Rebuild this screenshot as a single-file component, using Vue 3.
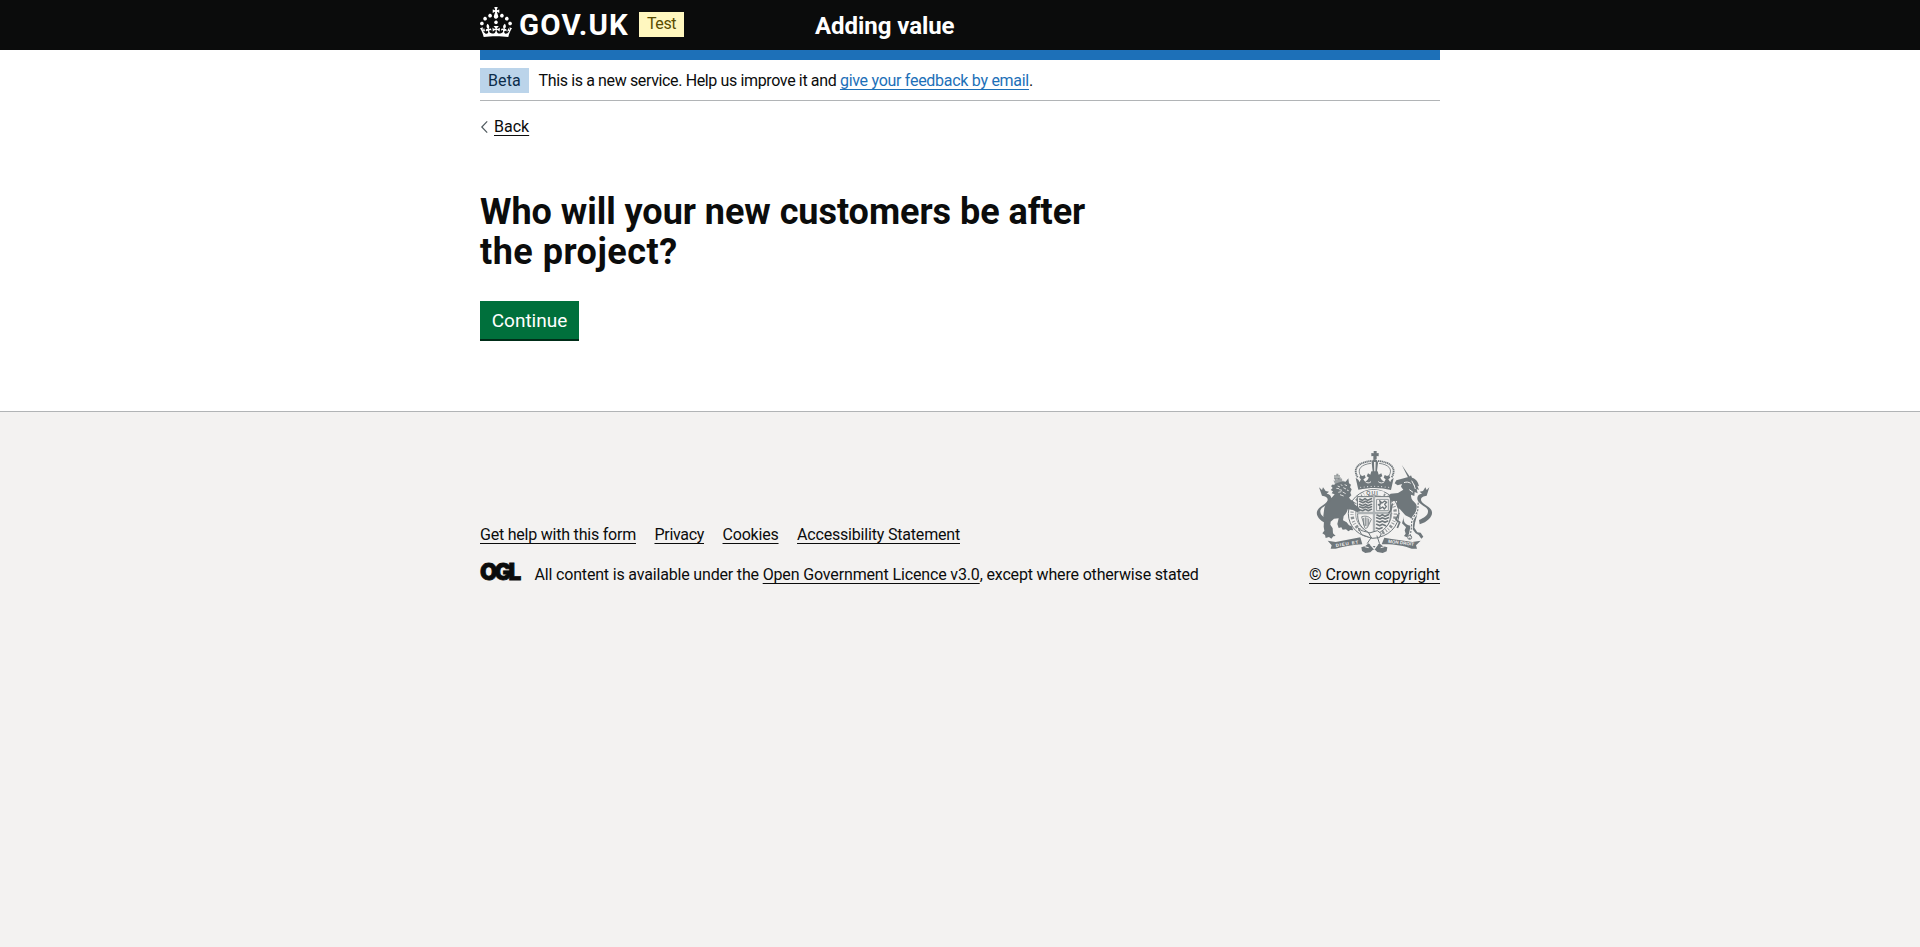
<script setup>
const footerLinks = [
  { label: 'Get help with this form', cls: 'help' },
  { label: 'Privacy', cls: 'privacy' },
  { label: 'Cookies', cls: 'cookies' },
  { label: 'Accessibility Statement', cls: 'access' },
]
const crownDots = Array.from({ length: 9 }, (_, i) => i)
</script>

<template>
  <div class="page">
    <header class="header">
      <div class="container header-row">
        <a class="brand" aria-label="GOV.UK">
          <svg class="crown" viewBox="0 0 32 30" width="32" height="30" fill="#fff" aria-hidden="true">
            <path d="M22.6 10.4c-1 .4-2-.1-2.4-1-.4-.9.1-2 1-2.4.9-.4 2 .1 2.4 1s-.1 2-1 2.4m-5.9 6.7c-.9.4-2-.1-2.4-1-.4-.9.1-2 1-2.4.9-.4 2 .1 2.4 1s-.1 2-1 2.4m10.8-3.7c-1 .4-2-.1-2.4-1-.4-.9.1-2 1-2.4.9-.4 2 .1 2.4 1s0 2-1 2.4m3.3 4.8c-1 .4-2-.1-2.4-1-.4-.9.1-2 1-2.4.9-.4 2 .1 2.4 1s-.1 2-1 2.4M17 4.7l2.3 1.2V2.5l-2.3.7-.2-.2.9-3h-3.4l.9 3-.2.2c-.1.1-2.3-.7-2.3-.7v3.4L15 4.7c.1.1.1.2.2.2l-1.3 4c-.1.2-.1.4-.1.6 0 1.1.8 2 1.9 2.2h.7c1-.2 1.9-1.1 1.9-2.1 0-.2 0-.4-.1-.6l-1.3-4c-.1-.2 0-.2.1-.3m-7.6 5.7c.9.4 2-.1 2.4-1 .4-.9-.1-2-1-2.4-.9-.4-2 .1-2.4 1s0 2 1 2.4m-5 3c.9.4 2-.1 2.4-1 .4-.9-.1-2-1-2.4-.9-.4-2 .1-2.4 1s.1 2 1 2.4m-3.2 4.8c.9.4 2-.1 2.4-1 .4-.9-.1-2-1-2.4-.9-.4-2 .1-2.4 1s0 2 1 2.4m14.8 11c4.4 0 8.6.3 12.3.8 1.1-4.5 2.4-7 3.7-8.8l-2.5-.9c.2 1.3.3 1.9 0 2.7-.4-.4-.8-1.1-1.1-2.3l-1.2 4c.7-.5 1.3-.8 2-.9-1.1 2.5-2.6 3.1-3.5 3-1.1-.2-1.7-1.2-1.5-2.1.3-1.2 1.5-1.5 2.1-.1 1.1-2.3-.8-3-2-2.3 1.9-1.9 2.1-3.5.6-5.6-2.1 1.6-2.1 3.2-1.2 5.5-1.2-1.4-3.2-.6-2.5 1.6.9-1.4 2.1-.5 1.9.8-.2 1.1-1.7 2.1-3.5 1.9-2.7-.2-2.9-2.1-2.9-3.6.7-.1 1.9.5 2.9 1.9l.4-4.3c-1.1 1.1-2.1 1.4-3.2 1.4.4-1.2 2.1-3 2.1-3h-5.4s1.7 1.9 2.1 3c-1.1 0-2.1-.2-3.2-1.4l.4 4.3c1-1.4 2.2-2 2.9-1.9-.1 1.5-.2 3.4-2.9 3.6-1.9.2-3.4-.8-3.5-1.9-.2-1.3 1-2.2 1.9-.8.7-2.3-1.2-3-2.5-1.6.9-2.2.9-3.9-1.2-5.5-1.5 2-1.3 3.7.6 5.6-1.2-.7-3.1 0-2 2.3.6-1.4 1.8-1.1 2.1.1.2.9-.3 1.9-1.5 2.1-.9.2-2.4-.5-3.5-3 .6 0 1.2.3 2 .9l-1.2-4c-.3 1.1-.7 1.9-1.1 2.3-.3-.8-.2-1.4 0-2.7l-2.9.9C1.3 23 2.6 25.5 3.7 30c3.7-.5 7.9-.8 12.3-.8" />
          </svg>
          <span class="wordmark">GOV.UK</span>
        </a>
        <strong class="tag tag-test">Test</strong>
        <span class="service">Adding value</span>
      </div>
    </header>

    <div class="container blue-bar"></div>

    <div class="container main-area">
      <div class="phase">
        <strong class="tag tag-beta">Beta</strong>
        <span class="phase-text"><span class="lead">This is a new service. Help us improve it and </span><a class="link blue">give your feedback by email</a>.</span>
      </div>

      <a class="back">
        <svg width="8" height="14" viewBox="0 0 8 14" fill="none" stroke="#505a5f" stroke-width="1.2" aria-hidden="true"><path d="M7.2 1.4 1.8 7l5.4 5.6" /></svg>
        <span class="link">Back</span>
      </a>

      <main class="main">
        <h1>Who will your new customers be after <span class="line-two">the project?</span></h1>
        <button class="continue" type="button">Continue</button>
      </main>
    </div>

    <footer class="footer">
      <div class="container footer-row">
        <div class="footer-main">
          <nav class="footer-links">
            <a v-for="l in footerLinks" :key="l.cls" class="link" :class="l.cls">{{ l.label }}</a>
          </nav>
          <div class="licence">
            <span class="ogl">OGL</span>
            <span><span class="lic-a">All content is available under the </span><a class="link lic-b">Open Government Licence v3.0</a><span class="lic-c">, except where otherwise stated</span></span>
          </div>
        </div>

        <div class="copyright">
          <svg class="crest" viewBox="80 155 351 306" width="117" height="102" aria-hidden="true">
            <g fill="none" stroke="#6f777b" stroke-linecap="round" stroke-linejoin="round">
              <!-- garter and shield -->
              <ellipse cx="253" cy="343" rx="76" ry="72" fill="#f3f2f1" stroke-width="3" />
              <ellipse cx="253" cy="343" rx="54" ry="55" stroke-width="2" />
              <ellipse cx="253" cy="343" rx="65" ry="63" stroke-width="10" stroke-dasharray="3 6 7 6 2 5" stroke-linecap="butt" opacity=".8" />
              <path d="M205 292h98v58c0 28-20 45-49 58-29-13-49-30-49-58z" fill="#f3f2f1" stroke-width="3" />
              <path d="M254 292v112M205 341h98" stroke-width="7" stroke="#aeb3b5" />
              <path d="M211 299l8 4 8-5 8 5 11-5M211 306l10 4 7-4 9 4 10-4M211 315l9 4 8-4 8 4 10-4M211 322l10 4 8-4 8 4 9-4M211 331l9 3 8-4 9 4 9-4" stroke-width="5" />
              <path d="M263 347l8 4 8-5 8 5 10-5M262 355l10 4 7-4 9 4 9-4M262 365l9 4 8-4 8 4 8-4M262 375l9 4 8-4 10 4M261 386l8 3 9-4" stroke-width="5" />
              <path d="M263 300h34v34h-34z" stroke-width="3" stroke="#90979a" />
              <path d="M271 304l7 7 8-6 6 4-6 6 5 7-6 7-5-6-9 6 1-9-5-4 7-2z" stroke-width="4" />
              <path d="M218 352c12-4 22 0 28 8l-12 25c-6 4-10 2-9-4zM223 357v20M228 355v24M233 356v24M238 359v16" stroke-width="2.5" />
              <path d="M207 386c10 12 22 9 33 15l24-7 12 9-6 12-22 2-30-11zM238 401l8 14M246 414l-12 18M263 410l7 21" stroke-width="3" fill="#f3f2f1" />
            </g>

            <g fill="#6f777b" font-family="Liberation Sans, sans-serif" font-weight="700">
              <path d="M226 291c14-8 38-9 56 0l3-14c-20-7-42-7-62 0z" fill="#f3f2f1" />
              <text x="231" y="288" font-size="16" letter-spacing="3">QUI</text>
            </g>

            <!-- crown -->
            <g fill="#6f777b">
              <path d="M253 155h9v7l6-1v10l-6-1v9h-10v-9l-6 1v-10l7 1z" />
              <path d="M247 190c1-8 5-11 9-11s8 3 10 11l-4 35h-11z" />
              <path d="M254 188h5l-1 34h-3z" fill="#f3f2f1" />
              <path d="M199 236c6 2 11 7 11 13l5-9-5-5 3-7 7 2 6-3 3 8-7 5 4 6c7 0 11-5 12-12l-6-3 4-9 7 4 3-10h19l3 10 8-4 3 9-6 3c2 7 6 12 13 12l3-6-6-5 3-8 7 3 6-2 4 7-6 5 6 9c0-6 5-11 10-13l-8 36c-31-8-62-8-98-1z" />
              <path d="M228 247c5 5 12 5 17 0M267 247c5 5 13 5 18 0" fill="none" stroke="#f3f2f1" stroke-width="3" />
              <circle v-for="i in crownDots" :key="i" :cx="214 + i * 10.5" :cy="264 - Math.sin(i / 8 * Math.PI) * 3" r="1.6" fill="#f3f2f1" />
            </g>
            <g fill="none" stroke="#6f777b" stroke-width="4">
              <path d="M205 234c-18-30 8-47 43-49M307 234c18-30-8-47-41-49" stroke-width="5.5" stroke-dasharray="4 1.5" />
              <path d="M214 230c-13-22 4-35 31-38M299 230c13-22-3-35-30-38" stroke-width="2.5" />
            </g>

            <!-- lion -->
            <g fill="#6f777b">
              <path d="M137 254l-5-11 4 2 2-8 5 4 4-5 5 4 6-3 1 8 5-1-4 10z" opacity=".65" />
              <path d="M141 223h6v5h5v4h-18v-4h7zM134 234h20v6h-20z" opacity=".7" />
              <path d="M133 257c10-7 25-12 36-10l8-10 2 15 6 4-3 8 5 6-4 10 3 8-7 7 6 7c7 1 10 6 11 13l13 10 4 11-10 2-14-7-14-1c-2 10-7 16-12 20l-2 13 11 6 7 9 8 3 5 12-9-1-6 4-7-6-10 1-4-7-8 2-4-12 4-17-14 1-10 9-1 9 7 11 1 15 8 8-7 1-6 7-7-5-10 3-2-9-8-5 6-8-2-12 1-17-2-16 3-23c3-14 12-24 24-33l7-8-9-3 4-6-7-4 6-6-5-6 6-5z" />
              <path d="M145 260l7 3M141 267l8 1M155 255l4 5M147 279l9-2M162 265l8 4M160 278l9 5M152 286l11 4M173 272l5 2M166 256l7 3M150 271l8 2" fill="none" stroke="#f3f2f1" stroke-width="2.5" />
              <path d="M119 375c-28-8-43-28-34-43 8-13 24-16 29-27 4-10-5-15-16-16l-9-25 9 8 3-8 8 11 10 2-7 6c16 2 17 17 7 27-10 11-27 14-26 27 1 12 12 18 28 25z" />
            </g>

            <!-- unicorn -->
            <g fill="#6f777b">
              <path d="M337 196l25 37-5 3z" />
              <path d="M360 232l5-4 3 7c13 3 19 14 21 26l-5-2 5 13-7-3 3 13-9-4-1 12-10-4c0 9 2 15 9 21 10 9 14 22 10 37l-7 27-2 14 9 14 10 1 8 12-6 6-8-11-9-5-10-13 3-20-9-14-15-7-16-18c-10-6-12-15-9-25-10 0-16 1-20-2l-2-8-5-5 8-7 22-2 16-10-7-9 3-8-13 4-9-6 5-9z" />
              <path d="M344 250c8-3 14-2 20 2M367 244l8 15M374 256l4 13M360 271l11 8" fill="none" stroke="#f3f2f1" stroke-width="3" />
              <path d="M309 312l-4 20-7 10M327 345l-7 16 11 8-7 17" fill="none" stroke="#6f777b" stroke-width="5" />
              <path d="M344 351c-5 20 8 28 26 29l-8 13-1 7-8 14-9-4 5-7-3-10 4-9-12-12z" />
              <path d="M391 375c28-8 43-28 35-43-8-13-25-16-30-27-4-10 5-15 16-16l8-25-8 8-4-8-7 11-10 2 7 6c-16 2-18 17-8 27 11 11 27 14 26 27-1 12-12 18-27 25z" />
              <path d="M387 310c-3 18 2 23-8 35-9 10-14 20-12 36l-6 38" fill="none" stroke="#f3f2f1" stroke-width="8" />
              <path d="M387 310c-3 18 2 23-8 35-9 10-14 20-12 36l-6 38" fill="none" stroke="#6f777b" stroke-width="3.5" stroke-dasharray="6 4" />
              <circle cx="361" cy="414" r="6" fill="none" stroke="#6f777b" stroke-width="3" />
            </g>

            <!-- motto ribbon -->
            <g fill="#6f777b">
              <path d="M115 424l24 4 74-14 6 21c-27 2-53 5-80 13h-15l3-10zM285 415c29 5 60 9 84 13l25-4-14 14 3 10h-16c-25-9-51-14-90-13z" />
              <path d="M216 444l12-4 10-8 8 8h16l8-8 10 8 14 4-2 12-12 5-16-3-7-7h-6l-8 8-15 2-10-6z" />
              <path d="M244 436l11 13 9-13" fill="none" stroke="#f3f2f1" stroke-width="4" />
              <path d="M226 442l12 3M274 445l11-3" fill="none" stroke="#f3f2f1" stroke-width="3" />
            </g>
            <g fill="#f3f2f1" font-family="Liberation Sans, sans-serif" font-weight="700" font-size="13.5">
              <text transform="translate(140 443) rotate(-9)" textLength="68">DIEU ET</text>
              <text transform="translate(296 430) rotate(7)" textLength="78">MON DROIT</text>
            </g>
          </svg>
          <a class="link copy">© Crown copyright</a>
        </div>
      </div>
    </footer>
  </div>
</template>

<style>
html, body { margin: 0; background: #f3f2f1; }
</style>

<style scoped>
.page {
  min-height: 947px;
  display: flex;
  flex-direction: column;
  background: #fff;
  color: #0b0c0c;
  font: 400 16px/20px Roboto, "Liberation Sans", sans-serif;
}
.container { width: 960px; margin: 0 auto; }

.header { height: 50px; background: #0b0c0c; color: #fff; }
.header-row { display: flex; align-items: flex-start; }
.brand { display: flex; width: 159px; }
.crown { margin-top: 7px; flex: none; }
.wordmark { margin: 10px 0 0 7px; font-size: 29.5px; line-height: 30px; font-weight: 700; letter-spacing: 1.15px; }
.tag {
  box-sizing: border-box;
  height: 25px;
  padding: 3px 0 2px 8px;
  font-weight: 400;
  flex: none;
}
.tag-test { width: 45px; margin-top: 12px; padding-top: 2px; background: #fff7bf; color: #594d00; letter-spacing: -.4px; }
.tag-beta { width: 49px; background: #bbd4ea; color: #0c2d4a; letter-spacing: .1px; }
.service { margin: 11px 0 0 131px; font-size: 24px; line-height: 30px; font-weight: 700; letter-spacing: -.06px; }

.blue-bar { height: 10px; background: #1d70b8; }

.phase {
  display: flex;
  height: 32px;
  padding-top: 8px;
  border-bottom: 1px solid #b1b4b6;
}
.phase-text { margin: 3px 0 0 9.5px; white-space: pre; }
.lead { letter-spacing: -.366px; }
.blue { color: #1d70b8; letter-spacing: -.285px; }
.link { text-decoration: underline; text-decoration-thickness: 1px; text-underline-offset: 3px; }

.back { display: flex; align-items: center; width: max-content; margin-top: 16px; }
.back svg { margin: -1px 6px 0 0; }

.main { padding-top: 55px; height: 219px; }
h1 { margin: 0; font-size: 36px; line-height: 40px; font-weight: 700; width: 640px; letter-spacing: -.04px; }
.line-two { letter-spacing: .5px; }
.continue {
  display: block;
  width: 99px;
  height: 38px;
  margin-top: 29px;
  padding: 1px 0 0;
  border: 0;
  background: #00703c;
  box-shadow: 0 2px 0 #002d18;
  color: #fff;
  font: 400 19px/37px Roboto, "Liberation Sans", sans-serif;
}

.footer { flex: 1; border-top: 1px solid #b1b4b6; background: #f3f2f1; }
.footer-row { display: flex; justify-content: space-between; align-items: flex-end; padding-top: 39px; }
.footer-links { display: flex; gap: 18.5px; margin-bottom: 20px; }
.help { letter-spacing: -.217px; }
.privacy { letter-spacing: -.31px; }
.cookies { letter-spacing: -.2px; }
.access { letter-spacing: -.187px; }
.licence { display: flex; white-space: pre; }
.ogl {
  width: 54.5px;
  margin-top: -3px;
  font: 900 22.5px/20px Inter, Roboto, sans-serif;
  letter-spacing: -2.9px;
  -webkit-text-stroke: .8px #0b0c0c;
}
.lic-a { letter-spacing: -.172px; }
.lic-b { letter-spacing: -.146px; }
.lic-c { letter-spacing: -.17px; }
.copyright { display: flex; flex-direction: column; align-items: flex-end; }
.crest { margin: 0 7px 12px 0; }
.copy { letter-spacing: -.09px; }
</style>
